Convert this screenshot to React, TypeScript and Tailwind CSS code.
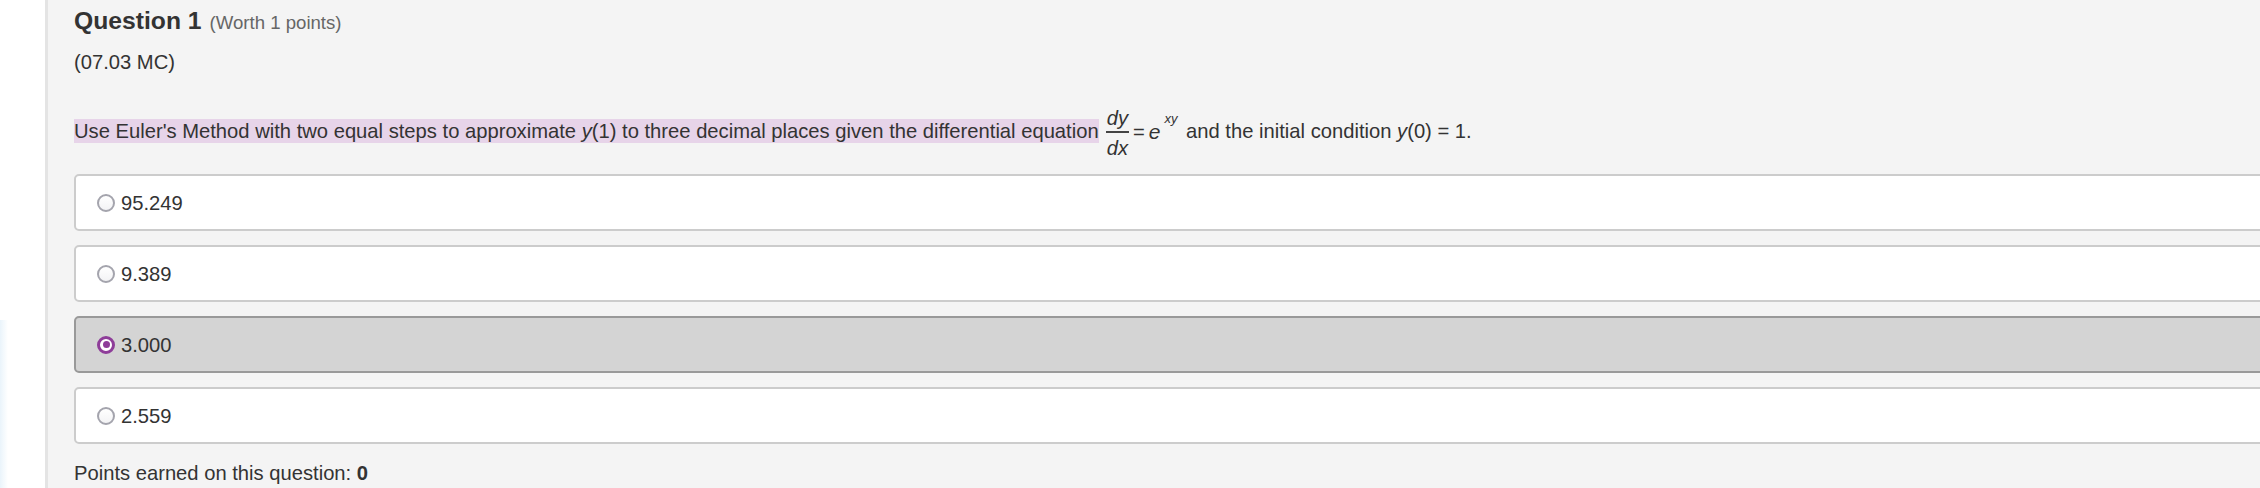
import React from "react";

const options = [
  { label: "95.249", selected: false },
  { label: "9.389", selected: false },
  { label: "3.000", selected: true },
  { label: "2.559", selected: false },
];

function Radio({ selected }: { selected: boolean }) {
  if (selected) {
    return (
      <div className="w-[18px] h-[18px] rounded-full border-[3px] border-[#8e3d99] bg-white flex items-center justify-center shrink-0">
        <div className="w-[7px] h-[7px] rounded-full bg-[#8e3d99]" />
      </div>
    );
  }
  return (
    <div className="w-[18px] h-[18px] rounded-full border-2 border-[#a4a4ad] bg-[linear-gradient(#ffffff,#f3f3f5)] shrink-0" />
  );
}

export default function App() {
  return (
    <div
      className="flex w-[2260px] h-[488px] overflow-hidden bg-white text-[#333333]"
      style={{ fontFamily: '"Liberation Sans", Arial, Helvetica, sans-serif' }}
    >
      {/* left gutter */}
      <div className="w-[45px] flex flex-col shrink-0">
        <div className="h-[320px] bg-white" />
        <div className="flex-1 bg-[linear-gradient(to_right,#eaf4fb,#ffffff_8px)]" />
      </div>
      <div className="w-[3px] bg-[#e4e4e4] shrink-0" />

      {/* panel */}
      <div className="flex-1 bg-[#f4f4f4] pl-[26px] pt-[6px]">
        <div className="flex items-baseline leading-[30px]">
          <span className="text-[24.7px] font-bold">Question 1</span>
          <span className="text-[18.6px] text-[#666666] ml-[8px]">(Worth 1 points)</span>
        </div>

        <div className="mt-[12px] text-[20.2px] leading-[24px]">(07.03 MC)</div>

        {/* question text */}
        <div className="mt-[33px] h-[67px] flex items-start whitespace-pre text-[20.2px]">
          <span className="mt-[12px] leading-[24px] bg-[#e7d4e9]">
            Use Euler's Method with two equal steps to approximate <i>y</i>(1) to three decimal places given the differential equation
          </span>
          <div className="ml-[7px] mt-[1px] flex flex-col items-center italic">
            <span className="leading-[20px] pb-[3px] px-[1px]">dy</span>
            <div className="w-full h-[1.5px] bg-[#444444]" />
            <span className="leading-[20px] pt-[5px]">dx</span>
          </div>
          <span className="ml-[4px] mt-[13px] leading-[24px]">=</span>
          <span className="ml-[4px] mt-[13px] leading-[24px] italic text-[21px]">e</span>
          <span className="ml-[4px] mt-[5px] leading-[13px] text-[13px] italic">xy</span>
          <span className="ml-[3px] mt-[12px] leading-[24px]">
            {" "}and the initial condition <i>y</i>(0) = 1.
          </span>
        </div>

        {/* options */}
        <div className="flex flex-col gap-[14px] mr-[-30px]">
          {options.map((o) => (
            <div
              key={o.label}
              className={
                o.selected
                  ? "h-[57px] rounded-[5px] border-2 border-[#999999] bg-[#d4d4d4] flex items-center pl-[21px] gap-[6px]"
                  : "h-[57px] rounded-[5px] border-2 border-[#cccccc] bg-white flex items-center pl-[21px] gap-[6px]"
              }
            >
              <Radio selected={o.selected} />
              <span className="text-[20.2px] leading-[24px]">{o.label}</span>
            </div>
          ))}
        </div>

        <div className="mt-[17px] text-[20.2px] leading-[24px]">
          Points earned on this question: <b>0</b>
        </div>
      </div>
    </div>
  );
}
